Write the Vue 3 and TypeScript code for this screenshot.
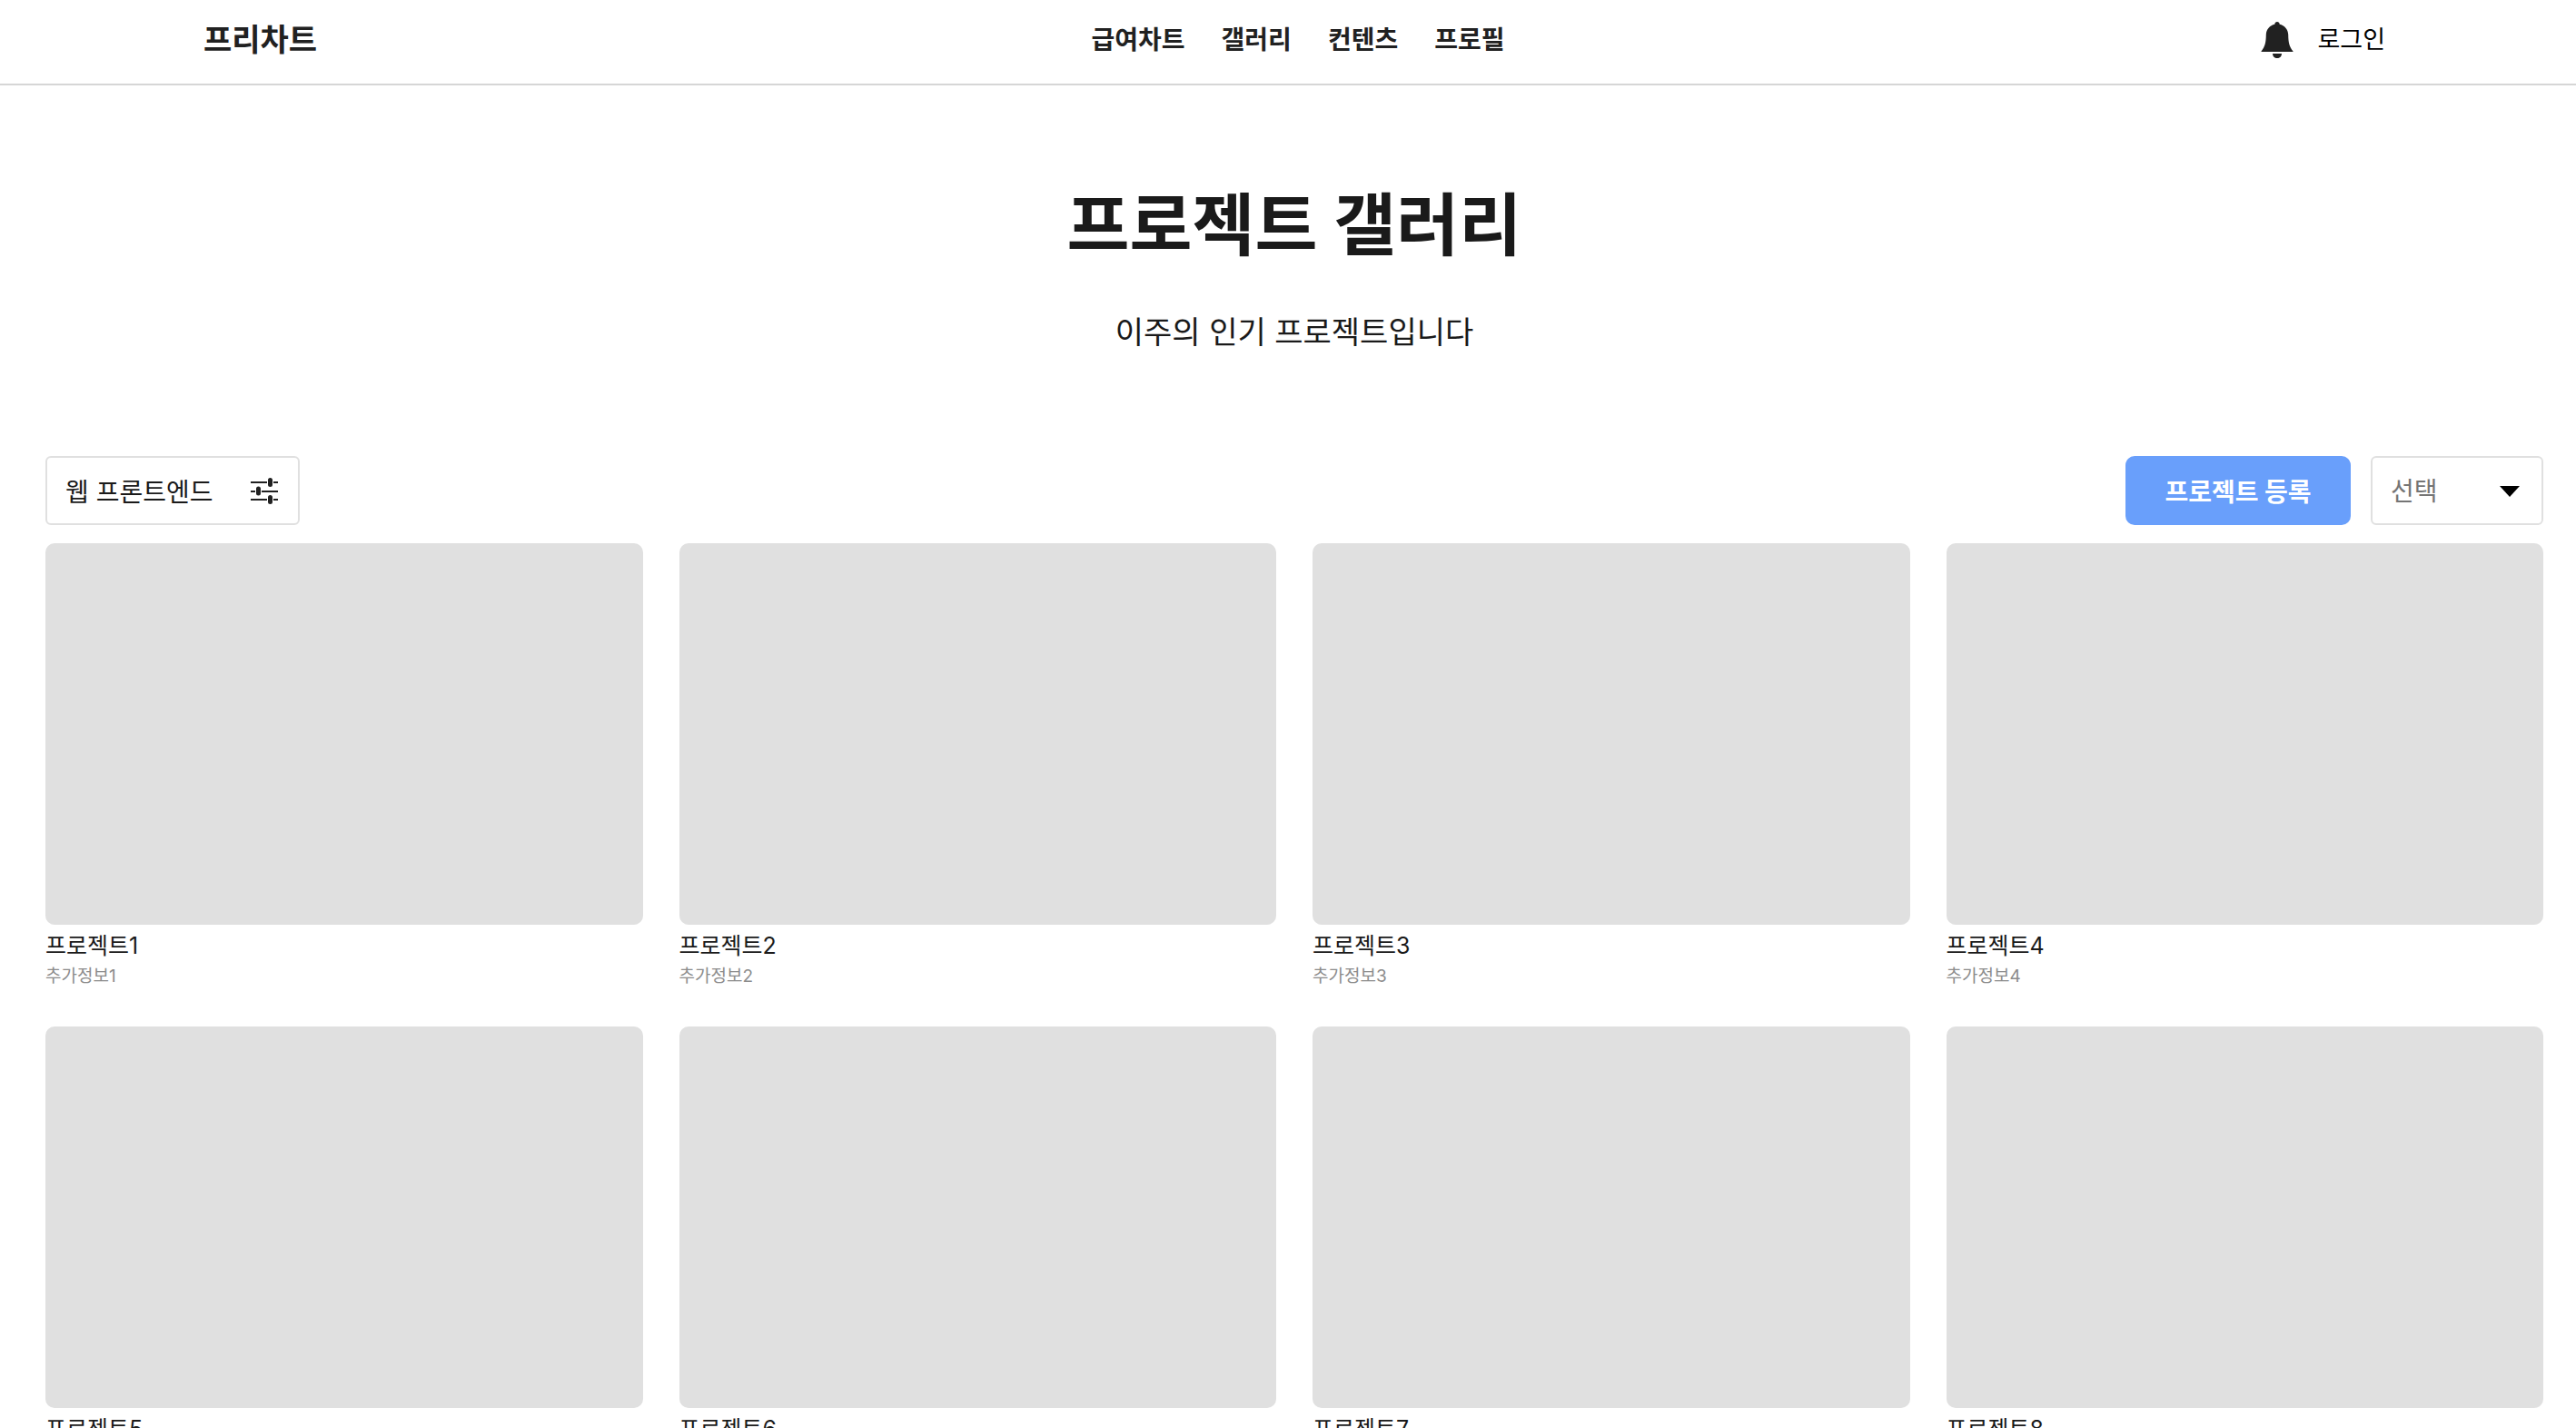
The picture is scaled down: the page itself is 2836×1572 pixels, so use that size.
<script setup lang="ts">
import { ref } from 'vue'

interface Project {
  id: number
  title: string
  info: string
}

const menus: string[] = ['급여차트', '갤러리', '컨텐츠', '프로필']

const projects: Project[] = Array.from({ length: 8 }, (_, i) => ({
  id: i + 1,
  title: `프로젝트${i + 1}`,
  info: `추가정보${i + 1}`,
}))

const sort = ref('')
</script>

<template>
  <div class="page">
    <header class="header">
      <a href="#" class="logo">프리차트</a>
      <nav class="nav">
        <a v-for="menu in menus" :key="menu" href="#">{{ menu }}</a>
      </nav>
      <div class="account">
        <button type="button" class="bell" aria-label="알림">
          <svg viewBox="0 0 36 40" width="36" height="40" fill="#212121">
            <path d="M18 0c1.500 0 2.600 1 2.700 2.700C26 3.800 30 8.500 30.200 14c.2 9 1 13 5.300 18.500V33H.5v-.5C4.800 27 5.600 23 5.800 14 6 8.500 10 3.800 15.300 2.700 15.400 1 16.500 0 18 0z" />
            <path d="M13 35h10c0 3-2.200 5-5 5s-5-2-5-5z" />
          </svg>
        </button>
        <a href="#" class="login">로그인</a>
      </div>
    </header>

    <main class="main">
      <section class="intro">
        <h1>프로젝트 갤러리</h1>
        <p>이주의 인기 프로젝트입니다</p>
      </section>

      <div class="toolbar">
        <button type="button" class="filter">
          <span>웹 프론트엔드</span>
          <svg viewBox="0 0 30 32" width="30" height="32" fill="none" stroke="#212121">
            <path d="M0 7h18M25 7h5M0 17h5M12 17h18M0 26h18M25 26h5" stroke-width="2" />
            <path d="M21.500 4.500v5M8.500 14v5M21.500 23.500v5" stroke-width="5" stroke-linecap="round" />
          </svg>
        </button>
        <div class="actions">
          <button type="button" class="register">프로젝트 등록</button>
          <div class="select">
            <select v-model="sort" aria-label="정렬">
              <option value="">선택</option>
              <option value="popular">인기순</option>
              <option value="latest">최신순</option>
            </select>
            <svg viewBox="0 0 22 14" width="22" height="14">
              <path d="M0 2h22L11 14z" />
            </svg>
          </div>
        </div>
      </div>

      <ul class="grid">
        <li v-for="project in projects" :key="project.id" class="card">
          <div class="thumb"></div>
          <h2>{{ project.title }}</h2>
          <p>{{ project.info }}</p>
        </li>
      </ul>
    </main>
  </div>
</template>

<style>
body {
  background: #fff;
}
</style>

<style scoped>
.page,
.page button,
.page select {
  font-family: Inter, 'Noto Sans CJK KR', sans-serif;
}

.page {
  color: #1a1a1a;
}

.page * {
  box-sizing: border-box;
}

a {
  color: inherit;
  text-decoration: none;
}

button {
  margin: 0;
  padding: 0;
  border: 0;
  background: none;
  color: inherit;
}

.header {
  display: grid;
  grid-template-columns: 1fr auto 1fr;
  align-items: center;
  height: 94px;
  padding: 0 202px 4px 224px;
  border-bottom: 2px solid #d6d6d6;
  color: #212121;
}

.logo {
  font-size: 34px;
  font-weight: 700;
  line-height: 48px;
}

.nav {
  display: flex;
  gap: 40px;
  font-size: 28px;
  font-weight: 700;
  line-height: 40px;
}

.account {
  display: flex;
  justify-content: flex-end;
  align-items: center;
  gap: 18px;
}

.bell {
  display: flex;
}

.login {
  padding: 0 8px;
  font-size: 27px;
  line-height: 40px;
  color: #000;
}

.main {
  padding: 0 36px 32px 50px;
}

.intro {
  padding: 98px 0 108px;
  text-align: center;
}

.intro h1 {
  margin: 0 0 34px;
  font-size: 75px;
  font-weight: 700;
  line-height: 112px;
}

.intro p {
  margin: 0;
  font-size: 34px;
  line-height: 56px;
}

.toolbar,
.actions {
  display: flex;
  justify-content: space-between;
}

.actions {
  gap: 22px;
}

.filter,
.select {
  display: flex;
  align-items: center;
  height: 76px;
  border: 2px solid #e0e0e0;
  border-radius: 6px;
}

.filter {
  justify-content: space-between;
  width: 280px;
  padding: 0 22px 0 20px;
  font-size: 28px;
}

.register {
  width: 248px;
  height: 76px;
  border-radius: 10px;
  background: #699ffb;
  color: #fff;
  font-size: 28px;
  font-weight: 700;
}

.select {
  position: relative;
  width: 190px;
}

.select select {
  width: 100%;
  height: 100%;
  padding: 2px 20px 0;
  border: 0;
  background: none;
  color: #757575;
  font-size: 28px;
  appearance: none;
}

.select svg {
  position: absolute;
  right: 24px;
  pointer-events: none;
}

.grid {
  display: grid;
  grid-template-columns: repeat(4, 1fr);
  gap: 40px;
  margin: 20px 0 0;
  padding: 0;
  list-style: none;
}

.thumb {
  height: 420px;
  border-radius: 10px;
  background: #e0e0e0;
}

.card h2 {
  margin: 4px 0 0;
  font-size: 25px;
  font-weight: 400;
  line-height: 38px;
}

.card p {
  margin: 0;
  font-size: 19px;
  line-height: 30px;
  color: #8c8c8c;
}
</style>
